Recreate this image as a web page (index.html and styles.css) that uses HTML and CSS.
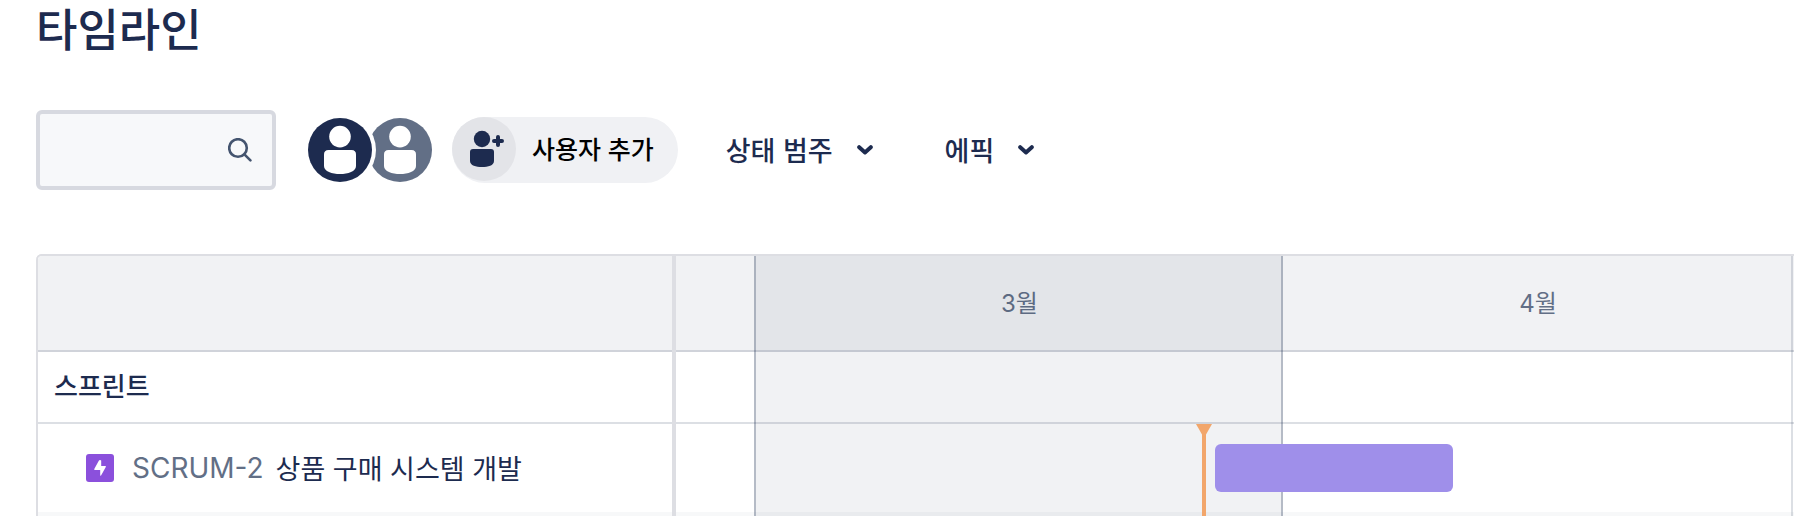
FILE: index.html
```html
<!DOCTYPE html>
<html lang="ko">
<head>
<meta charset="utf-8">
<meta name="viewport" content="width=device-width, initial-scale=1">
<title>타임라인</title>
<link rel="stylesheet" href="styles.css">
</head>
<body>
<main class="page">
  <h1 class="title">타임라인</h1>

  <div class="toolbar">
    <label class="search">
      <input class="search-input" type="text" aria-label="타임라인 검색">
      <svg class="search-icon" viewBox="0 0 24 24" aria-hidden="true"><circle cx="10" cy="10" r="8.8"/><path d="M16.4 16.4l6 6"/></svg>
    </label>

    <div class="avatars">
      <button class="avatar avatar-front" type="button" aria-label="담당자">
        <svg viewBox="0 0 64 64" aria-hidden="true"><circle cx="32" cy="18.6" r="10.8"/><path d="M16 36.5Q16 32 20.500 32H43.500Q48 32 48 36.500V48C48 53.500 40 56 32 56S16 53.500 16 48Z"/></svg>
      </button>
      <button class="avatar avatar-back" type="button" aria-label="할당되지 않음">
        <svg viewBox="0 0 64 64" aria-hidden="true"><circle cx="32" cy="18.6" r="10.8"/><path d="M16 36.5Q16 32 20.500 32H43.500Q48 32 48 36.500V48C48 53.500 40 56 32 56S16 53.500 16 48Z"/></svg>
      </button>
    </div>

    <button class="add-user" type="button">
      <span class="add-user-badge">
        <svg viewBox="0 0 64 64" aria-hidden="true"><circle cx="30" cy="22" r="8.200"/><path d="M18 35Q18 32 21 32H39Q42 32 42 35V44C42 48.500 36 50 30 50S18 48.500 18 44Z"/><path class="plus" d="M46 20V28M42 24H50"/></svg>
      </span>
      <span>사용자 추가</span>
    </button>

    <div class="filters">
      <button class="filter" type="button">상태 범주
        <svg class="chevron" viewBox="0 0 16 10" aria-hidden="true"><path d="M2.200 2.200L8 7.400L13.800 2.200"/></svg>
      </button>
      <button class="filter" type="button">에픽
        <svg class="chevron" viewBox="0 0 16 10" aria-hidden="true"><path d="M2.200 2.200L8 7.400L13.800 2.200"/></svg>
      </button>
    </div>
  </div>

  <section class="board" aria-label="타임라인">
    <div class="list">
      <div class="row row-head"></div>
      <div class="row row-sprint">스프린트</div>
      <div class="row row-epic">
        <svg class="epic-icon" viewBox="0 0 28 28" aria-hidden="true"><rect width="28" height="28" rx="3"/><path d="M14.800 6.300Q15.200 5.800 15.200 6.800V12H19.300Q20.300 12 19.800 13L15.200 21.300Q14.200 22.500 14.200 21V16H8.900Q7.700 16 8.400 14.800L12.800 6.800Q13.600 5.500 14.800 6.300Z"/></svg>
        <a class="epic-key" href="#">SCRUM-2</a>
        <span class="epic-name">상품 구매 시스템 개발</span>
      </div>
      <div class="row row-next"></div>
    </div>

    <div class="chart">
      <div class="columns">
        <div></div>
        <div class="column column-current"></div>
        <div class="column column-month"></div>
        <div class="column column-edge"></div>
      </div>
      <div class="row row-head months">
        <span class="march">3월</span>
        <span class="april">4월</span>
      </div>
      <div class="row row-sprint"></div>
      <div class="row row-epic"></div>
      <div class="row row-next"></div>
      <div class="today" style="left: 47.050%"></div>
      <button class="bar" type="button" aria-label="SCRUM-2 일정" style="left: 48.210%; width: 21.290%"></button>
    </div>
  </section>
</main>
</body>
</html>
```
FILE: styles.css
```css
* {
  box-sizing: border-box;
}

body {
  margin: 0;
  background: #fff;
  color: #1d2b4f;
  font-family: Inter, "Noto Sans CJK KR", sans-serif;
  font-size: 26px;
  font-weight: 500;
  line-height: 32px;
}

button {
  padding: 0;
  border: 0;
  background: none;
  color: inherit;
  font: inherit;
  cursor: pointer;
}

svg {
  display: block;
}

.page {
  display: flex;
  flex-direction: column;
  min-height: 100vh;
  padding-left: 36px;
}

.title {
  margin: 0 0 48px;
  font-size: 45px;
  font-weight: 500;
  line-height: 62px;
}

.toolbar {
  display: flex;
  align-items: center;
  height: 80px;
  margin-bottom: 64px;
}

.search {
  display: flex;
  align-items: center;
  width: 240px;
  height: 80px;
  margin-right: 32px;
  padding: 0 20px;
  border: 4px solid #d7d9e0;
  border-radius: 6px;
  background: #f7f8fa;
}

.search-input {
  flex: 1;
  min-width: 0;
  border: 0;
  outline: 0;
  background: transparent;
  color: inherit;
  font: inherit;
}

.search-icon {
  width: 24px;
  height: 24px;
  fill: none;
  stroke: #44546f;
  stroke-width: 2.6;
  stroke-linecap: round;
}

.avatars {
  display: flex;
  margin-right: 20px;
}

.avatar {
  width: 64px;
  height: 64px;
  border-radius: 50%;
  fill: #fff;
}

.avatar-front {
  z-index: 1;
  background: #1d2b4f;
  box-shadow: 0 0 0 4px #fff;
}

.avatar-back {
  margin-left: -4px;
  background: #626f86;
}

.add-user {
  display: flex;
  gap: 16px;
  height: 66px;
  margin-right: 48px;
  padding-right: 24px;
  border-radius: 33px;
  background: #f0f1f4;
  color: #000;
  font-size: 25px;
  line-height: 66px;
  white-space: nowrap;
}

.add-user-badge {
  width: 64px;
  height: 64px;
  border-radius: 50%;
  background: #e3e4e8;
  fill: #1d2b4f;
}

.plus {
  stroke: #1d2b4f;
  stroke-width: 4;
  stroke-linecap: round;
}

.filters {
  display: flex;
  gap: 72px;
}

.filter {
  display: flex;
  align-items: center;
  gap: 24px;
  font-family: "Noto Sans CJK KR", sans-serif;
  font-size: 27px;
  line-height: 34px;
  white-space: nowrap;
}

.chevron {
  width: 16px;
  height: 10px;
  fill: none;
  stroke: #1d2b4f;
  stroke-width: 4;
  stroke-linecap: round;
  stroke-linejoin: round;
}

.board {
  display: grid;
  grid-template-columns: 640px 1fr;
  flex: 1;
  border-top: 2px solid #dddee3;
  border-radius: 6px 0 0 0;
}

.list,
.chart {
  display: flex;
  flex-direction: column;
}

.list {
  margin-top: -2px;
  border: solid #dddee3;
  border-width: 2px 4px 0 2px;
  border-top-left-radius: 6px;
  overflow: hidden;
}

.chart {
  position: relative;
}

.row {
  display: flex;
  align-items: center;
}

.row-head {
  height: 96px;
  border-bottom: 2px solid rgba(9, 30, 66, 0.14);
  background: #f1f2f4;
}

.row-sprint {
  height: 72px;
  padding: 0 16px;
  border-bottom: 2px solid rgba(9, 30, 66, 0.14);
}

.row-epic {
  height: 88px;
  padding-left: 48px;
  white-space: nowrap;
}

.row-next {
  flex: 1;
  min-height: 4px;
  background: rgba(9, 30, 66, 0.03);
}

.epic-icon {
  width: 28px;
  height: 28px;
  margin-right: 18px;
  fill: #fff;
}

.epic-icon rect {
  fill: #8b50dc;
}

.epic-key {
  margin-right: 12px;
  color: #626f86;
  font-size: 28px;
  font-weight: 400;
  text-decoration: none;
}

.epic-name {
  font-family: "Noto Sans CJK KR", sans-serif;
  font-size: 27px;
  font-weight: 400;
}

.columns,
.months {
  display: grid;
  grid-template-columns: 78px 527fr 510fr 3px;
}

.columns {
  position: absolute;
  inset: 0;
  z-index: 1;
  pointer-events: none;
}

.column {
  border-left: 2px solid rgba(9, 30, 66, 0.3);
}

.column-current {
  background: rgba(9, 30, 66, 0.06);
  background-clip: padding-box;
}

.column-edge {
  border-left-color: rgba(9, 30, 66, 0.14);
}

.months {
  padding-top: 2px;
  color: #626f86;
  font-size: 24px;
  font-weight: 400;
  text-align: center;
}

.march,
.april {
  padding-left: 4px;
}

.march {
  grid-column: 2;
}

.april {
  grid-column: 3;
}

.today {
  position: absolute;
  top: 168px;
  bottom: 0;
  z-index: 2;
  width: 4px;
  background: #f2a66b;
}

.today::before {
  content: "";
  position: absolute;
  top: 0;
  left: -6px;
  border: solid transparent;
  border-width: 14px 8px 0;
  border-top-color: #f2a66b;
}

.bar {
  position: absolute;
  top: 188px;
  z-index: 2;
  height: 48px;
  border-radius: 6px;
  background: #9f8fea;
}
```
